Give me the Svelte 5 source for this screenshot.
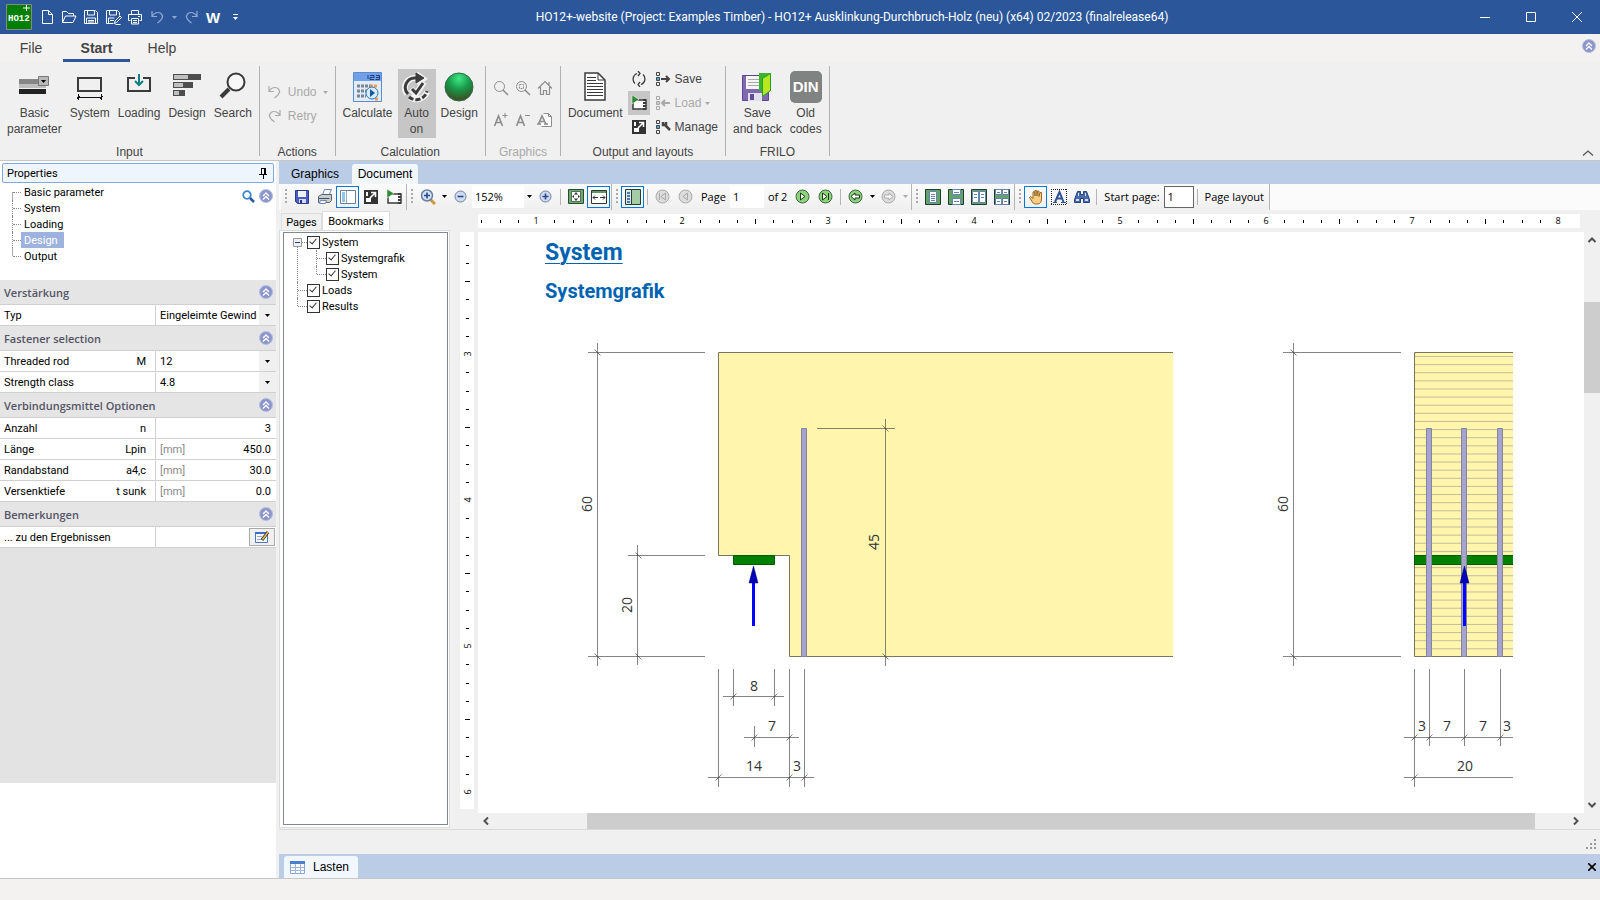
<script lang="ts">
  const inputTools = [
    { icon: 'basic', lines: ['Basic', 'parameter'] },
    { icon: 'system', lines: ['System'] },
    { icon: 'loading', lines: ['Loading'] },
    { icon: 'bars', lines: ['Design'] },
    { icon: 'search', lines: ['Search'] }
  ];
  const quickTools = ['new', 'open', 'disk', 'diskpen', 'print'];
  const graphicTools = ['lens', 'lensbox', 'home', 'aplus', 'aminus', 'apage'];
  const pages = ['Basic parameter', 'System', 'Loading', 'Design', 'Output'];

  let activePage = $state('Design');
  let viewerWidth = $state(0);
  let viewerHeight = $state(0);

  const sections = [
    {
      title: 'Verstärkung',
      rows: [{ id: 'typ', name: 'Typ', symbol: '', options: ['Eingeleimte Gewindestangen'] }]
    },
    {
      title: 'Fastener selection',
      rows: [
        { id: 'rod', name: 'Threaded rod', symbol: 'M', options: ['12'] },
        { id: 'strength', name: 'Strength class', symbol: '', options: ['4.8'] }
      ]
    },
    {
      title: 'Verbindungsmittel Optionen',
      rows: [
        { id: 'count', name: 'Anzahl', symbol: 'n', unit: '', value: '3' },
        { id: 'length', name: 'Länge', symbol: 'Lpin', unit: '[mm]', value: '450.0' },
        { id: 'edge', name: 'Randabstand', symbol: 'a4,c', unit: '[mm]', value: '30.0' },
        { id: 'sunk', name: 'Versenktiefe', symbol: 't sunk', unit: '[mm]', value: '0.0' }
      ]
    },
    {
      title: 'Bemerkungen',
      rows: [{ id: 'notes', name: '... zu den Ergebnissen', symbol: '', edit: true }]
    }
  ];

  // rulers: one unit is 146 px, split into eighths
  const UNIT = 146;

  function ticks(origin: number, length: number) {
    const result = [];
    const first = Math.ceil((-origin * 8) / UNIT);
    for (let i = first; origin + (i * UNIT) / 8 < length; i++) {
      result.push({ i, pos: Math.round(origin + (i * UNIT) / 8) });
    }
    return result;
  }

  let hTicks = $derived(ticks(58, viewerWidth - 42));
  let vTicks = $derived(ticks(122, viewerHeight - 46));

  const layers = Array.from({ length: 37 }, (_, i) => 356.5 + i * 8.12);
  const rods = [1429.5, 1464.5, 1500.5];

  // dimension slashes
  const slashes = [
    [733.5, 696.5], [774.5, 696.5], [754.5, 737.5], [789.5, 737.5],
    [718.5, 777.5], [789.5, 777.5], [804.5, 777.5],
    [1414.5, 737.5], [1429.5, 737.5], [1464.5, 737.5], [1500.5, 737.5], [1414.5, 777.5]
  ];
  const backSlashes = [
    [597.5, 352.5], [597.5, 656.5], [638.5, 555.5], [638.5, 656.5],
    [885.5, 428.5], [885.5, 656.5], [1293.5, 352.5], [1293.5, 656.5]
  ];
</script>

{#snippet icon(name: string)}
  {#if name === 'new'}
    <svg width="16" height="16" fill="none" stroke="currentColor"><path d="M3.5 1.5h6l4 4v9h-10zM9.5 1.5v4h4" /></svg>
  {:else if name === 'open'}
    <svg width="16" height="16" fill="none" stroke="currentColor"><path d="M1.5 13.5v-11h4l2 2h5v2.500M1.500 13.500l3-6.500h10.500l-3 6.500z" /></svg>
  {:else if name === 'disk'}
    <svg width="16" height="16" fill="none" stroke="currentColor"><path d="M1.500 1.500h11l2 2v11h-13zM4.500 1.500v4.500h7v-4.500M3.500 14.500v-5.500h9v5.500M5 11.500h6M5 13h6" /></svg>
  {:else if name === 'diskpen'}
    <svg width="17" height="16" fill="none" stroke="currentColor"><path d="M8.500 14.500h-7v-13h11l2 2v3M4.500 1.500v4.500h7v-4.500M3.500 14.500v-5.500h6M5 11.500h4M9.500 14.500l.5-2.500 5-5 1.500 1.500-5 5zM10.500 15.500h5" /></svg>
  {:else if name === 'print'}
    <svg width="16" height="16" fill="none" stroke="currentColor"><path d="M4.500 5v-3.500h7v3.500M3.500 11.500h-2v-6h13v6h-2M4.500 9.500h7v5.500h-7zM6 11.500h4M6 13.500h4M11 7.500h2" /></svg>
  {:else if name === 'undo'}
    <svg width="15" height="14" fill="none" stroke="currentColor" stroke-width="1.200"><path d="M2 1v5.500h5M2 6.500c2-4 6-5 9-3 3 3 1.500 6-3.500 9.500" /></svg>
  {:else if name === 'redo'}
    <svg width="15" height="14" fill="none" stroke="currentColor" stroke-width="1.200"><path d="M13 1v5.500h-5M13 6.500c-2-4-6-5-9-3-3 3-1.500 6 3.500 9.500" /></svg>
  {:else if name === 'basic'}
    <svg width="32" height="30"><path fill="#868686" d="M1 7h27v5H1z" /><path fill="#bdbdbd" d="M1 12h27v4H1z" /><path fill="#222" d="M1 17h27v5H1z" /><path fill="#b9b9b9" stroke="#777" d="M20.500 4.500h10v9h-10z" /><path d="M23 8h5l-2.500 3z" /></svg>
  {:else if name === 'system'}
    <svg width="30" height="30" fill="none" stroke="#3b3b3b"><path stroke-width="2" d="M3 6h23v13H3z" /><path stroke="#111" d="M2 25.500h25M3.500 22v6M26.500 22v6M2 27l3-3M25 27l3-3" /></svg>
  {:else if name === 'loading'}
    <svg width="30" height="30" fill="none" stroke="#3b3b3b"><path stroke-width="2" d="M11 6H4v13h22V6h-7" /><path stroke="#118080" stroke-width="2" d="M15 2v10M11 9l4 4 4-4" /></svg>
  {:else if name === 'bars'}
    <svg width="30" height="30"><path fill="#4d4d4d" d="M1 2h28v6H1zM1 10h20v6H1zM1 18h12v6H1z" /><path fill="#bfbfbf" d="M2 3h14v4H2zM2 11h9v4H2zM2 19h5v4H2z" /></svg>
  {:else if name === 'search'}
    <svg width="30" height="30" fill="none" stroke="#3b3b3b"><circle cx="18" cy="10" r="8.500" stroke-width="2" fill="#f8f8f8" /><path stroke-width="4" d="M3 25l8-8" /></svg>
  {:else if name === 'calc'}
    <svg width="30" height="32"><path fill="#e3edf9" stroke="#5b8bd0" d="M.500 1.500h28v29h-28z" /><path fill="#72a0e8" d="M1 2h27v8H1z" /><path fill="none" stroke="#1d3f7d" d="M15 4v4M17 4.500h4v2h-4v2h4M23 4.500h3.500v4h-4M23 6.500h4" /><path fill="none" stroke="#7a8696" stroke-dasharray="3 1" stroke-width="3" d="M4 15h15M4 20h10M4 25h9" /><path fill="none" stroke="#ee9b54" stroke-dasharray="3 1" stroke-width="3" d="M17 15h8M22 28h4" /><circle cx="19" cy="22" r="6" fill="#d9ecfb" stroke="#2d77b9" /><path fill="#14599b" d="M17 18l5 4-5 4z" /></svg>
  {:else if name === 'auto'}
    <svg width="30" height="32" fill="none" stroke="#3b3b3b"><path stroke="#f2f2f2" stroke-width="6" d="M5 23a10 10 0 0 1 9-16M14 3l7 5-6 5M9 18l5 5 8-12M8 26a11 11 0 0 0 17-5" /><path stroke-width="3" d="M6 23a9.500 9.500 0 0 1 8-16" /><path fill="#3b3b3b" d="M14 2l8 5-8 5z" /><path stroke-width="3" d="M10 18l4 4 7-10" /><path stroke-width="3" stroke-dasharray="5 2" d="M7 26a11 11 0 0 0 18-6" /></svg>
  {:else if name === 'ball'}
    <svg width="30" height="32"><defs><radialGradient id="ball" cx=".5" cy=".2" r=".8"><stop offset="0" stop-color="#3fe884" /><stop offset=".5" stop-color="#18974a" /><stop offset="1" stop-color="#414a20" /></radialGradient></defs><circle cx="15" cy="16" r="14" fill="url(#ball)" stroke="#2c7047" /></svg>
  {:else if name === 'lens'}
    <svg width="16" height="16" fill="none" stroke="currentColor"><circle cx="6.500" cy="6.500" r="5" /><path stroke-width="1.500" d="M10 10l5 5" /></svg>
  {:else if name === 'lensbox'}
    <svg width="16" height="16" fill="none" stroke="currentColor"><circle cx="6.500" cy="6.500" r="5" /><path stroke-dasharray="2 1" d="M4.500 4.500h4v4h-4z" /><path stroke-width="1.500" d="M10 10l5 5" /></svg>
  {:else if name === 'home'}
    <svg width="16" height="16" fill="none" stroke="currentColor" stroke-width="1.200"><path d="M1 8.500L8 1.500l7 7M3.500 7v7.500h3v-4h3v4h3V7M12 2v3" /></svg>
  {:else if name === 'aplus' || name === 'aminus'}
    <svg width="16" height="16" fill="none" stroke="currentColor"><path stroke-width="1.600" d="M1.500 14l4-10 4 10M3 10.500h5" /><path d={name === 'aplus' ? 'M9.500 3.500h5M12 1v5' : 'M10 3.500h5'} /></svg>
  {:else if name === 'apage'}
    <svg width="16" height="16" fill="none" stroke="currentColor"><path fill="#fff" d="M6.500 1.500h5l3 3v10h-10" /><path d="M11.500 1.500v3h3" /><path stroke-width="1.600" d="M1.500 12l3.500-8 4 8M3 9.500h5M0 12h4M7 12h4" /></svg>
  {:else if name === 'document'}
    <svg width="30" height="32" fill="none" stroke="#3b3b3b"><path fill="#fff" stroke-width="1.500" d="M5 2h13l7 7v20H5z" /><path d="M18 2v7h7M7 6.500h9M7 9.500h9M7 12.500h16M7 15.500h16M7 18.500h16M7 21.500h16M7 24.500h16" /></svg>
  {:else if name === 'refresh'}
    <svg width="16" height="16" fill="none" stroke="#3b3b3b" stroke-width="1.300"><path d="M6 2.500a6 6 0 0 0-2 10M10 13.500a6 6 0 0 0 2-10M7 0l2 2.500-2 2.500M9 16l-2-2.500 2-2.500" /></svg>
  {:else if name === 'film'}
    <svg width="16" height="16"><path fill="#fff" stroke="#3b3b3b" stroke-width="1.500" d="M2 5h13v9H2z" /><path stroke="#3b3b3b" stroke-width="3" stroke-dasharray="2 1" d="M13.500 4v11" /><path fill="#2e8b32" stroke="#fff" stroke-width=".5" d="M1 0l7 4.500-7 4.500z" /></svg>
  {:else if name === 'expand'}
    <svg width="16" height="16"><path fill="#333" d="M1 1h14v14H1z" /><path fill="#fff" d="M3 9h5v4H3zM3 3h2v4H3z" /><path fill="none" stroke="#fff" stroke-width="1.600" d="M7 9l5-5M8 3.500h4.500V8" /></svg>
  {:else if name === 'lsave' || name === 'lload' || name === 'lmanage'}
    <svg width="16" height="16" fill="none" stroke="currentColor"><path d="M1.500 1.500h3v3h-3zM1.500 11.500h3v3h-3z" /><path fill={name === 'lload' ? '#c8c8c8' : '#45b3e8'} d="M1.500 6.500h3v3h-3z" />
      {#if name === 'lsave'}<path stroke-width="2" d="M6 8h8M11 5l3 3-3 3" />{:else if name === 'lload'}<path stroke-width="2" d="M15 8H7M10 5L7 8l3 3" />{:else}<path stroke-width="2.500" d="M8 3v3h3V3M10 6l5 5" />{/if}
    </svg>
  {:else if name === 'saveback'}
    <svg width="32" height="32"><path fill="#8069ae" stroke="#5c4593" d="M1.500 4.500h26v25h-26z" /><path fill="#f5f5f5" d="M5 5h17v13H5z" /><path stroke="#aaa" d="M7 8.500h12M7 11.500h12M7 14.500h12" /><path fill="#e1e1ec" d="M7 22h14v8H7z" /><path fill="#604c97" d="M9 23h4v6H9z" /><path fill="#38b52c" d="M18 2h12v18H18z" /><path fill="#b7e81f" stroke="#21a12b" d="M21.500 7.500l8-5v17l-8 6z" /></svg>
  {:else if name === 'pin'}
    <svg width="9" height="11" fill="none" stroke="#000"><path d="M2.500 0v6.500M2 .500h4M0 6.500h8M4.500 7v4" /><path stroke-width="2" d="M6 0v6" /></svg>
  {:else if name === 'bluelens'}
    <svg width="13" height="13" fill="none"><circle cx="5" cy="5" r="3.800" stroke="#3d86cf" stroke-width="1.800" /><path stroke="#2857a5" stroke-width="2.500" d="M8 8l4 4" /></svg>
  {:else if name === 'collapse'}
    <svg width="14" height="14" fill="none"><circle cx="7" cy="7" r="6.500" fill="#8c95cb" stroke="#b5bfe0" /><path stroke="#fff" stroke-width="1.300" d="M4 7l3-3 3 3M4 10.500l3-3 3 3" /></svg>
  {:else if name === 'edit'}
    <svg width="16" height="14"><path fill="#f4f8ff" stroke="#4c78c4" d="M1.500 2.500h12v10h-12z" /><path fill="#3d6fc6" d="M1 2h13v2H1z" /><path stroke="#9ab" d="M3 6.500h5M3 9.500h5" /><path stroke="#333" stroke-width="3" d="M8 10l6-8" /><path stroke="#e9b64d" stroke-width="1.600" d="M8.500 9.500l5.500-7.500" /></svg>
  {:else if name === 'bluedisk'}
    <svg width="16" height="16"><path fill="#4b5cc0" stroke="#2a3a8c" d="M1.500 1.500h13v13h-11l-2-2z" /><path fill="#eef2fc" d="M4 2h8v6H4z" /><path fill="#d5daee" d="M5 10h7v4H5z" /><path fill="#27357f" d="M6 11h2v3H6z" /></svg>
  {:else if name === 'printer'}
    <svg width="16" height="16"><path fill="#fff" stroke="#6d89b3" d="M5.500 6l2-5.500h7L12 6z" /><path fill="#c7cdd5" stroke="#59616c" d="M1.500 7.500l3-2h10v6l-2 2h-11z" /><path stroke="#4a4f57" d="M2 9.500h10.500" /><path fill="#f0d34a" d="M10 11h2v1h-2z" /><path fill="#fff" stroke="#6d89b3" d="M3.500 11.500h6l-1 3h-6z" /></svg>
  {:else if name === 'sidebar'}
    <svg width="16" height="14"><path fill="#fff" stroke="#6f7f92" d="M.500.500h15v13H.500z" /><path fill="#8cc8ea" d="M2 2h3v10H2z" /><path stroke="#9aa7b5" d="M6.500 1v12" /></svg>
  {:else if name === 'zoomdoc'}
    <svg width="16" height="16" fill="none"><path stroke="#c99b3d" stroke-width="3" d="M10 10l5 5" /><circle cx="7" cy="6.500" r="5.500" fill="#d4e2f4" stroke="#6a7f9c" stroke-width="1.500" /><path stroke="#29498f" stroke-width="1.600" d="M4 6.500h6M7 3.500v6" /></svg>
  {:else if name === 'minus' || name === 'plus'}
    <svg width="13" height="13" fill="none"><circle cx="6.500" cy="6.500" r="5.500" fill="#cfdcef" stroke="#71809b" /><path stroke="#29498f" stroke-width="1.600" d={name === 'plus' ? 'M3.500 6.500h6M6.500 3.500v6' : 'M3.500 6.500h6'} /></svg>
  {:else if name === 'fit'}
    <svg width="16" height="16" fill="none"><path fill="#6fa876" stroke="#234f2b" d="M.500.500h15v14H.500z" /><path fill="#fff" stroke="#55705a" d="M3.500 2.500h9v10h-9z" /><path fill="#333" d="M8 3l2 2.500H6zM8 12l2-2.500H6zM4 7.500L6 6v3zM12 7.500L10 6v3z" /></svg>
  {:else if name === 'fitwidth'}
    <svg width="16" height="16" fill="none"><path fill="#fff" stroke="#333" d="M.500 1.500h15v13H.500z" /><path fill="#5a9a62" d="M1 2h14v2H1z" /><path stroke="#333" d="M2 8.500h5M9 8.500h5M4 6.500l-2 2 2 2M12 6.500l2 2-2 2" /></svg>
  {:else if name === 'thumbs'}
    <svg width="16" height="16"><path fill="#a5cda5" stroke="#24402a" d="M.500.500h15v15H.500z" /><path fill="#dbe8f2" d="M1 1h5v14H1z" /><path fill="#4c7aa9" d="M2 3h3v2H2zM2 6h3v2H2zM2 9h3v2H2zM2 12h3v2H2z" /><path stroke="#24402a" d="M6.500 1v14" /></svg>
  {:else if name === 'first' || name === 'prev'}
    <svg width="15" height="15" fill="none" stroke="#aaa"><circle cx="7.500" cy="7.500" r="6.500" fill="#dcdcdc" />{#if name === 'first'}<path d="M4.500 4v7M10.500 4L6 7.500l4.500 3.500z" />{:else}<path d="M9.500 4L5 7.500 9.500 11z" />{/if}</svg>
  {:else if name === 'next' || name === 'last'}
    <svg width="15" height="15" fill="none" stroke="#1d3a20"><circle cx="7.500" cy="7.500" r="6.500" fill="#8fd07c" stroke="#3b6b3e" /><path fill="#eafbe2" d={name === 'last' ? 'M4.500 4L9 7.500 4.500 11zM10.500 4v7' : 'M5.500 4L10 7.500 5.500 11z'} /></svg>
  {:else if name === 'back' || name === 'forward'}
    <svg width="15" height="15" fill="none"><circle cx="7.500" cy="7.500" r="6.500" fill={name === 'back' ? '#8fd07c' : '#dcdcdc'} stroke={name === 'back' ? '#3b6b3e' : '#aaa'} /><path fill="#fff" stroke={name === 'back' ? '#1d3a20' : '#aaa'} d={name === 'back' ? 'M3 7.500l4-3.500v2h4.500v3H7v2z' : 'M12 7.500L8 4v2H3.500v3H8v2z'} /></svg>
  {:else if name === 'single' || name === 'cont' || name === 'facing' || name === 'grid'}
    <svg width="16" height="16"><path fill="#63a36a" stroke="#1c3f2c" d="M.500.500h15v15H.500z" />
      <g fill="#fff" stroke="#6483b0">
        {#if name === 'single'}<path d="M4.500 2.500h7v11h-7zM6 5.500h4M6 7.500h4M6 9.500h4M6 11.500h4" />
        {:else if name === 'cont'}<path d="M4.500.500h8v5h-8zM4.500 9.500h8v6h-8zM6 3.500h5M6 12.500h5" />
        {:else if name === 'facing'}<path d="M1.500 2.500h6v11h-6zM8.500 2.500h6v11h-6zM3 5.500h3M3 8.500h3M10 5.500h3M10 8.500h3" />
        {:else}<path d="M1.500.500h6v5h-6zM8.500.500h6v5h-6zM1.500 9.500h6v6h-6zM8.500 9.500h6v6h-6zM3 3.500h3M10 3.500h3M3 12.500h3M10 12.500h3" />{/if}
      </g>
    </svg>
  {:else if name === 'hand'}
    <svg width="16" height="16"><path fill="#f6cf85" stroke="#9b6a23" d="M5 14L1.500 8.500l1-1L5 9.500V3l1.500-.5L7 7V1.500h1.500L9 7l.5-5H11v5.500l1-4h1.500V10c0 3-1.500 5-4 5C7 15 6 15 5 14z" /></svg>
  {:else if name === 'textsel'}
    <svg width="16" height="16" fill="none"><path stroke="#222" stroke-dasharray="1 1" d="M0 .500h16M0 15.500h16M.500 0v16M15.500 0v16" /><path stroke="#315292" stroke-width="2" d="M4 13L8.500 3l4 10M5.500 9.500h6" /><path stroke="#315292" d="M2 13.500h4M10 13.500h5" /></svg>
  {:else if name === 'find'}
    <svg width="16" height="16"><path fill="#4a6bb0" stroke="#27417c" d="M3.500 2.500h3v3h3v-3h3l3 8v3h-6v-4h-3v4h-6v-3z" /><path fill="#cfe0f8" d="M2 10h3v2H2zM11 10h3v2h-3zM4 4h1v3H4zM11 4h1v3h-1z" /></svg>
  {/if}
{/snippet}

{#snippet caret()}
  <svg class="caret" width="5" height="3"><path fill="currentColor" d="M0 0h5L2.500 3z" /></svg>
{/snippet}

{#snippet bigTool(name: string, lines: string[], on = false)}
  <button class="big-tool" class:on>
    <span class="big-icon">{@render icon(name)}</span>
    {#each lines as line}<span>{line}</span>{/each}
  </button>
{/snippet}

{#snippet tool(name: string, on = false)}
  <button class="tool" class:on aria-label={name}>{@render icon(name)}</button>
{/snippet}

{#snippet arrow(x: number)}
  <path fill="#00f" d={`M${x - 1.500} 582h3v44h-3z`} />
  <path fill="#00b" stroke="#006" stroke-width=".5" d={`M${x} 566l4.500 17h-9z`} />
{/snippet}

<div class="app">
  <header class="titlebar">
    <div class="quick">
      <svg class="logo" width="26" height="26"><path fill="#008000" stroke="#888" d="M.500.500h25v25H.500z" /><path stroke="#fff" d="M17 4h7M20.500 1v6" /><text x="2" y="17" fill="#fff" font-size="9" font-weight="bold" font-family="Liberation Mono">HO12</text></svg>
      {#each quickTools as name}
        <button aria-label={name}>{@render icon(name)}</button>
      {/each}
      <button class="faded" aria-label="undo">{@render icon('undo')}</button>
      <button class="faded narrow" aria-label="undo list">{@render caret()}</button>
      <button class="faded" aria-label="redo">{@render icon('redo')}</button>
      <button class="word">W</button>
      <button aria-label="customize"><svg width="7" height="7" fill="currentColor"><path d="M1 0h5v1H1zM1 3h5L3.500 6z" /></svg></button>
    </div>
    <h1>HO12+-website (Project: Examples Timber) - HO12+ Ausklinkung-Durchbruch-Holz (neu) (x64) 02/2023 (finalrelease64)</h1>
    <div class="window-buttons">
      <button aria-label="minimize"><svg width="10" height="10" stroke="#fff"><path d="M0 5.500h10" /></svg></button>
      <button aria-label="maximize"><svg width="10" height="10" fill="none" stroke="#fff"><path d="M.500.500h9v9h-9z" /></svg></button>
      <button aria-label="close"><svg width="10" height="10" stroke="#fff"><path d="M0 0l10 10M10 0L0 10" /></svg></button>
    </div>
  </header>

  <nav class="menu">
    <button>File</button>
    <button class="active">Start</button>
    <button>Help</button>
    <button class="menu-end" aria-label="collapse">{@render icon('collapse')}</button>
  </nav>

  <section class="ribbon">
    <div class="group">
      <div class="tools">
        {#each inputTools as t}{@render bigTool(t.icon, t.lines)}{/each}
      </div>
      <div class="group-name">Input</div>
    </div>
    <div class="group">
      <div class="small-list disabled actions">
        <button>{@render icon('undo')}<span>Undo</span>{@render caret()}</button>
        <button>{@render icon('redo')}<span>Retry</span></button>
      </div>
      <div class="group-name">Actions</div>
    </div>
    <div class="group">
      <div class="tools tight">
        {@render bigTool('calc', ['Calculate'])}
        {@render bigTool('auto', ['Auto', 'on'], true)}
        {@render bigTool('ball', ['Design'])}
      </div>
      <div class="group-name">Calculation</div>
    </div>
    <div class="group disabled">
      <div class="icon-grid">
        {#each graphicTools as name}
          <button aria-label={name}>{@render icon(name)}</button>
        {/each}
      </div>
      <div class="group-name">Graphics</div>
    </div>
    <div class="group">
      <div class="tools tight">
        {@render bigTool('document', ['Document'])}
        <div class="small-list">
          <button class="square" aria-label="refresh">{@render icon('refresh')}</button>
          <button class="square on" aria-label="preview">{@render icon('film')}</button>
          <button class="square" aria-label="expand">{@render icon('expand')}</button>
        </div>
        <div class="small-list">
          <button>{@render icon('lsave')}<span>Save</span></button>
          <button class="disabled">{@render icon('lload')}<span>Load</span>{@render caret()}</button>
          <button>{@render icon('lmanage')}<span>Manage</span></button>
        </div>
      </div>
      <div class="group-name">Output and layouts</div>
    </div>
    <div class="group">
      <div class="tools">
        {@render bigTool('saveback', ['Save', 'and back'])}
        <button class="big-tool"><span class="big-icon"><b class="din">DIN</b></span><span>Old</span><span>codes</span></button>
      </div>
      <div class="group-name">FRILO</div>
    </div>
    <button class="ribbon-toggle" aria-label="hide ribbon"><svg width="12" height="6" fill="none" stroke="#555" stroke-width="1.300"><path d="M1 5.500l5-4.500 5 4.500" /></svg></button>
  </section>

  <main>
    <aside>
      <div class="panel-title"><span>Properties</span>{@render icon('pin')}</div>
      <div class="nav-area">
        <ul class="nav-tree">
          {#each pages as page}
            <li><button class:selected={page === activePage} onclick={() => (activePage = page)}>{page}</button></li>
          {/each}
        </ul>
        <div class="nav-icons">{@render icon('bluelens')}{@render icon('collapse')}</div>
      </div>
      <div class="properties">
        {#each sections as section}
          <h2>{section.title}{@render icon('collapse')}</h2>
          {#each section.rows as row}
            <div class="prop">
              <label for={row.id}><span>{row.name}</span><span>{row.symbol}</span></label>
              <div class="value">
                {#if row.options}
                  <select id={row.id}>
                    {#each row.options as option}<option>{option}</option>{/each}
                  </select>
                  <span class="drop">{@render caret()}</span>
                {:else if row.edit}
                  <button id={row.id} class="edit" aria-label="edit">{@render icon('edit')}</button>
                {:else}
                  <span class="unit">{row.unit}</span>
                  <input id={row.id} value={row.value} />
                {/if}
              </div>
            </div>
          {/each}
        {/each}
      </div>
    </aside>

    <section class="workspace">
      <div class="doc-tabs">
        <button>Graphics</button>
        <button class="active">Document</button>
      </div>

      <div class="toolbar">
        <div class="bar">
          {@render tool('bluedisk')}{@render tool('printer')}{@render tool('sidebar', true)}{@render tool('expand')}{@render tool('film')}
        </div>
        <div class="bar">
          {@render tool('zoomdoc')}
          <button class="drop-arrow" aria-label="zoom list">{@render caret()}</button>
          {@render tool('minus')}
          <input class="zoom" aria-label="zoom" value="152%" />
          <button class="drop-arrow" aria-label="zoom values">{@render caret()}</button>
          {@render tool('plus')}
          <i></i>
          {@render tool('fit')}{@render tool('fitwidth', true)}
        </div>
        <div class="bar">
          {@render tool('thumbs', true)}
          <i></i>
          {@render tool('first')}{@render tool('prev')}
          <label for="page">Page</label>
          <input id="page" class="page" value="1" />
          <span>of 2</span>
          {@render tool('next')}{@render tool('last')}
          <i></i>
          {@render tool('back')}
          <button class="drop-arrow" aria-label="back list">{@render caret()}</button>
          {@render tool('forward')}
          <button class="drop-arrow off" aria-label="forward list">{@render caret()}</button>
        </div>
        <div class="bar">
          {@render tool('single')}{@render tool('cont')}{@render tool('facing')}{@render tool('grid')}
        </div>
        <div class="bar">
          {@render tool('hand', true)}{@render tool('textsel')}{@render tool('find')}
          <i></i>
          <label for="start">Start page:</label>
          <input id="start" class="start" value="1" />
          <i></i>
          <button class="text-button">Page layout</button>
        </div>
      </div>

      <div class="content">
        <div class="outline">
          <div class="outline-tabs">
            <button>Pages</button>
            <button class="active">Bookmarks</button>
          </div>
          <div class="outline-frame">
            <ul class="check-tree">
              <li class="root">
                <svg class="toggle" width="9" height="9"><path fill="#eee" stroke="#999" d="M.500.500h8v8h-8z" /><path stroke="#24458f" d="M2 4.500h5" /></svg>
                <label><input type="checkbox" checked />System</label>
                <ul>
                  <li><label><input type="checkbox" checked />Systemgrafik</label></li>
                  <li><label><input type="checkbox" checked />System</label></li>
                </ul>
              </li>
              <li><label><input type="checkbox" checked />Loads</label></li>
              <li><label><input type="checkbox" checked />Results</label></li>
            </ul>
          </div>
        </div>

        <div class="viewer" bind:clientWidth={viewerWidth} bind:clientHeight={viewerHeight}>
          <svg class="h-ruler" height="14">
            {#each hTicks as t}
              {#if t.i % 8 === 0}
                <text x={t.pos} y="10">{t.i / 8 + 1}</text>
              {:else}
                <path d={`M${t.pos + 0.5} ${t.i % 4 ? 6 : 5}v${t.i % 4 ? 3 : 5}`} />
              {/if}
            {/each}
          </svg>
          <svg class="v-ruler" width="14">
            {#each vTicks as t}
              {#if t.i % 8 === 0}
                <text transform={`translate(11 ${t.pos}) rotate(-90)`}>{t.i / 8 + 3}</text>
              {:else}
                <path d={`M${t.i % 4 ? 6 : 5} ${t.pos + 0.5}h${t.i % 4 ? 3 : 5}`} />
              {/if}
            {/each}
          </svg>
          <article class="paper">
            <h3 class="chapter">System</h3>
            <h3>Systemgrafik</h3>
            <svg class="drawing" width="1035" height="480" viewBox="478 320 1035 480">
              <path class="wood" d="M1173 352.500H718.500v203h71v101H1173" />
              <path class="steel" d="M733.500 555.500h41v9h-41z" />
              <path class="rod" d="M801.500 428.500h5v228h-5z" />
              {@render arrow(753.5)}

              <path class="wood" d="M1520 352.500h-105.500v304h105.500" />
              {#each layers as y}
                <path class="layer" d={`M1415 ${y}h98`} />
              {/each}
              <path class="steel" d="M1414.500 555.500h105v9h-105z" />
              {#each rods as x}
                <path class="rod" d={`M${x - 3} 428.500h5v228h-5z`} />
              {/each}
              {@render arrow(1464.5)}

              <g class="dim">
                <path d="M597.500 343v323M588 352.500h117M588 656.500h117" />
                <path d="M637.500 545v120M628 555.500h77" />
                <path d="M885.500 419v247M817 428.500h78" />
                <path d="M718.500 669v118M789.500 669v118M804.500 669v118M708 777.500h106" />
                <path d="M733.500 669v37M774.500 669v37M723 696.500h61" />
                <path d="M754.500 726v21M744 737.500h55" />
                <path d="M1293.500 343v323M1283 352.500h118M1283 656.500h118" />
                <path d="M1414.500 669v118M1429.500 669v77M1464.500 669v77M1500.500 669v77" />
                <path d="M1404 737.500h109M1404 777.500h109" />
                {#each slashes as [x, y]}<path d={`M${x - 3} ${y + 3}l6-6`} />{/each}
                {#each backSlashes as [x, y]}<path d={`M${x - 3} ${y - 3}l6 6`} />{/each}
              </g>
              <g class="dim-text">
                <text transform="translate(592 504) rotate(-90)">60</text>
                <text transform="translate(632 605) rotate(-90)">20</text>
                <text transform="translate(879 542) rotate(-90)">45</text>
                <text transform="translate(1288 504) rotate(-90)">60</text>
                <text x="754" y="691">8</text>
                <text x="772" y="731">7</text>
                <text x="754" y="771">14</text>
                <text x="797" y="771">3</text>
                <text x="1422" y="731">3</text>
                <text x="1447" y="731">7</text>
                <text x="1483" y="731">7</text>
                <text x="1507" y="731">3</text>
                <text x="1465" y="771">20</text>
              </g>
            </svg>
          </article>
          <div class="v-scroll">
            <svg width="16" height="16"><path d="M4.500 10L8 6.500l3.500 3.500" /></svg>
            <div class="track"><div class="thumb"></div></div>
            <svg width="16" height="16"><path d="M4.500 6L8 9.500 11.500 6" /></svg>
          </div>
          <div class="h-scroll">
            <svg width="16" height="16"><path d="M10 4.500L6.500 8l3.500 3.500" /></svg>
            <div class="track"><div class="thumb"></div></div>
            <svg width="16" height="16"><path d="M6 4.500L9.500 8 6 11.500" /></svg>
          </div>
        </div>
      </div>

      <div class="grip-row">
        <svg width="12" height="10" fill="#999"><path d="M9 0h2v2H9zM5 4h2v2H5zM9 4h2v2H9zM1 8h2v2H1zM5 8h2v2H5zM9 8h2v2H9z" /></svg>
      </div>

      <div class="bottom-tabs">
        <button>
          <svg width="15" height="13"><path fill="#fff" stroke="#8aa4cf" d="M.500.500h14v12H.500z" /><path fill="#4b7fd1" d="M0 0h15v3H0z" /><path stroke="#9db4dc" d="M5.500 3v10M10.500 3v10M1 6.500h13M1 9.500h13" /></svg>
          Lasten
        </button>
        <button class="close" aria-label="close panel"><svg width="8" height="8" stroke="#000" stroke-width="1.600"><path d="M0 0l8 8M8 0L0 8" /></svg></button>
      </div>
    </section>
  </main>

  <footer></footer>
</div>

<style>
  :global(body) {
    margin: 0;
    overflow: hidden;
  }

  .app {
    height: 100vh;
    display: flex;
    flex-direction: column;
    background: #f0f0f0;
    color: #000;
    font-family: "Liberation Sans", Arial, sans-serif;
    font-size: 11px;
  }

  button,
  input,
  select {
    margin: 0;
    padding: 0;
    border: none;
    background: none;
    color: inherit;
    font: inherit;
  }

  button {
    display: flex;
    align-items: center;
    justify-content: center;
    white-space: nowrap;
  }

  svg {
    display: block;
    flex: none;
  }

  ul {
    list-style: none;
    margin: 0;
    padding: 0;
  }

  /* title bar */
  .titlebar {
    height: 34px;
    flex: none;
    display: grid;
    grid-template-columns: 1fr auto 1fr;
    align-items: center;
    background: #2b579a;
    color: #fff;
  }

  .titlebar h1 {
    margin: 0 0 0 104px;
    font: 12px/16px Roboto, sans-serif;
  }

  .quick {
    display: flex;
    align-items: center;
    padding-left: 6px;
  }

  .logo {
    margin-right: 4px;
  }

  .quick button {
    width: 22px;
    height: 24px;
  }

  .quick .narrow {
    width: 12px;
  }

  .quick .faded {
    color: #8fa9d0;
  }

  .quick .word {
    font-size: 15px;
    font-weight: bold;
  }

  .window-buttons {
    display: flex;
    justify-content: flex-end;
  }

  .window-buttons button {
    width: 46px;
    height: 34px;
  }

  /* ribbon */
  .menu {
    height: 28px;
    flex: none;
    display: flex;
    padding-left: 7px;
    background: #f3f2f0;
    color: #444;
    font-size: 14px;
  }

  .menu button {
    width: 48px;
    box-sizing: border-box;
    padding-top: 2px;
    border-bottom: 3px solid transparent;
    margin-right: 8px;
  }

  .menu .active {
    width: 67px;
    font-weight: bold;
    border-color: #2b579a;
  }

  .menu .menu-end {
    width: 14px;
    margin: 0 4px 0 auto;
    padding: 0 0 2px;
  }

  .ribbon {
    height: 98px;
    flex: none;
    display: flex;
    border-bottom: 1px solid #c6c6c6;
    color: #444;
    font-size: 12px;
  }

  .group {
    display: flex;
    flex-direction: column;
    justify-content: space-between;
    box-sizing: border-box;
    height: 90px;
    margin-top: 4px;
    padding: 3px 7px 0;
    border-right: 1px solid #b1b1b1;
  }

  .group-name {
    text-align: center;
    line-height: 8px;
  }

  .disabled {
    color: #a9a9a9;
  }

  .tools {
    display: flex;
    gap: 8px;
  }

  .tools.tight {
    gap: 5px;
  }

  .big-tool {
    flex-direction: column;
    justify-content: flex-start;
    height: 69px;
    line-height: 16px;
  }

  .big-icon {
    height: 36px;
    display: flex;
    align-items: center;
  }

  .big-tool.on {
    width: 38px;
    background: #c6c6c6;
  }

  .din {
    width: 32px;
    border-radius: 5px;
    background: #7f8382;
    color: #fff;
    font-size: 15px;
    line-height: 32px;
  }

  .small-list {
    display: flex;
    flex-direction: column;
    align-items: flex-start;
    margin-top: -2px;
  }

  .small-list button {
    height: 24px;
    gap: 4px;
  }

  .small-list.actions {
    padding-top: 13px;
  }

  .actions button {
    gap: 6px;
  }

  .small-list .square {
    width: 22px;
  }

  .square.on {
    background: #c6c6c6;
  }

  .icon-grid {
    display: grid;
    grid-template-columns: repeat(3, 22px);
    color: #8c8c8c;
    margin: 0 -3px;
    padding-top: 3px;
  }

  .icon-grid button {
    height: 32px;
  }

  .ribbon-toggle {
    margin: auto 6px 4px auto;
  }

  main {
    flex: 1;
    min-height: 0;
    display: flex;
    gap: 3px;
  }

  /* properties panel */
  aside {
    width: 276px;
    flex: none;
    display: flex;
    flex-direction: column;
    background: #fff;
  }

  aside,
  .outline {
    font-family: Roboto, "Liberation Sans", sans-serif;
  }

  .panel-title {
    display: flex;
    justify-content: space-between;
    align-items: center;
    height: 18px;
    margin: 2px 2px 0;
    padding: 0 5px 0 4px;
    border: 1px solid #84aadb;
    border-radius: 2px;
    background: #eff5fd;
  }

  .nav-area {
    display: flex;
    justify-content: space-between;
    height: 97px;
    box-sizing: border-box;
    padding: 1px 3px 0 12px;
  }

  .nav-tree li {
    display: flex;
    align-items: center;
    height: 16px;
    border-left: 1px dotted #888;
  }

  .nav-tree li:first-child {
    border-image: linear-gradient(transparent 50%, #aaa 50%) 1;
  }

  .nav-tree li:last-child {
    border-image: linear-gradient(#aaa 50%, transparent 50%) 1;
  }

  .nav-tree li::before {
    content: '';
    width: 8px;
    border-top: 1px dotted #888;
  }

  .nav-tree button {
    height: 16px;
    padding: 0 6px 0 3px;
  }

  .nav-tree .selected {
    background: #9db2de;
    color: #fff;
  }

  .nav-icons {
    display: flex;
    align-items: center;
    gap: 4px;
    height: 24px;
  }

  .properties {
    height: 503px;
    background: #e3e3e3;
  }

  .properties h2 {
    display: flex;
    justify-content: space-between;
    align-items: center;
    height: 24px;
    margin: 0;
    padding: 0 3px 0 4px;
    border-bottom: 1px solid #d0d0d0;
    background: #e5e5e5;
    color: #556;
    font: 600 11px "Open Sans", sans-serif;
  }

  .prop {
    display: grid;
    grid-template-columns: 156px 1fr;
    height: 20px;
    border-bottom: 1px solid #d0d0d0;
    background: #fff;
  }

  .prop label {
    display: flex;
    justify-content: space-between;
    align-items: center;
    padding: 0 9px 0 4px;
    border-right: 1px solid #d0d0d0;
  }

  .value {
    display: flex;
    align-items: center;
    min-width: 0;
    padding-left: 4px;
    position: relative;
  }

  select {
    appearance: none;
    width: 97px;
    overflow: hidden;
    white-space: nowrap;
  }

  .drop {
    position: absolute;
    right: 0;
    top: 0;
    bottom: 0;
    width: 17px;
    display: flex;
    align-items: center;
    justify-content: center;
    background: #f0f0f0;
    pointer-events: none;
  }

  .unit {
    width: 30px;
    color: #888;
  }

  .value input {
    flex: 1;
    min-width: 0;
    padding-right: 5px;
    text-align: right;
  }

  .edit {
    width: 26px;
    height: 18px;
    margin: 0 1px 0 auto;
    box-sizing: border-box;
    border: 1px solid #aaa;
    background: #f0f0f0;
  }

  /* document area */
  .workspace {
    flex: 1;
    min-width: 0;
    display: flex;
    flex-direction: column;
  }

  .doc-tabs {
    display: flex;
    align-items: flex-end;
    height: 23px;
    flex: none;
    background: #bbcde6;
    font-size: 12px;
  }

  .doc-tabs button {
    width: 66px;
    height: 20px;
    border-radius: 3px 3px 0 0;
  }

  .doc-tabs button:first-child {
    margin: 0 4px 0 3px;
  }

  .doc-tabs .active {
    background: #f2f7fe;
  }

  .toolbar {
    display: flex;
    flex: none;
    height: 26px;
    padding-left: 2px;
    background: #fbfbfb;
    font: 11px "Open Sans", sans-serif;
  }

  .bar {
    display: flex;
    align-items: center;
    padding: 0 1px 1px 0;
    border-right: 1px solid #b5b5b5;
    background: linear-gradient(#fbfbfb, #efefef);
  }

  .bar::before {
    content: '';
    width: 2px;
    height: 15px;
    margin: 0 3px 0 4px;
    background: repeating-linear-gradient(#aaa 0 2px, transparent 2px 4px);
  }

  .bar i {
    width: 1px;
    height: 16px;
    margin: 0 3px;
    background: #b5b5b5;
  }

  .bar label,
  .bar span {
    padding: 0 4px;
  }

  .tool {
    width: 23px;
    height: 22px;
    box-sizing: border-box;
  }

  .tool.on {
    border: 1px solid #0078d7;
  }

  .drop-arrow {
    width: 10px;
    height: 22px;
  }

  .drop-arrow.off {
    color: #aaa;
  }

  .bar input {
    height: 22px;
    box-sizing: border-box;
    padding: 0 3px;
    background: #fff;
  }

  .bar .zoom {
    width: 52px;
  }

  .bar .page {
    width: 34px;
  }

  .bar .start {
    width: 30px;
    border: 1px solid #666;
  }

  .text-button {
    padding: 0 4px;
  }

  .content {
    flex: 1;
    min-height: 0;
    display: flex;
    gap: 10px;
  }

  .outline {
    width: 171px;
    flex: none;
    display: flex;
    flex-direction: column;
    padding-top: 1px;
  }

  .outline-tabs {
    display: flex;
    align-items: flex-end;
    padding-left: 2px;
  }

  .outline-tabs button {
    width: 41px;
    height: 17px;
    border: 1px solid #dcdcdc;
    border-bottom: none;
    box-sizing: border-box;
  }

  .outline-tabs .active {
    width: 68px;
    height: 19px;
    background: #fff;
  }

  .outline-frame {
    flex: 1;
    display: flex;
    padding: 1px 1px 2px 3px;
    border: 1px solid #dcdcdc;
    margin-bottom: 1px;
    background: #fff;
  }

  .check-tree {
    flex: 1;
    border: 1px solid #828790;
    padding: 1px 0 0 9px;
  }

  .check-tree label {
    display: flex;
    align-items: center;
    gap: 2px;
    height: 16px;
  }

  .check-tree li {
    position: relative;
    padding-left: 14px;
  }

  .check-tree li::before {
    content: '';
    position: absolute;
    left: 4px;
    top: 0;
    bottom: 0;
    border-left: 1px dotted #888;
  }

  .check-tree li:last-child::before {
    bottom: auto;
    height: 8px;
  }

  .check-tree .root::before {
    top: 8px;
  }

  .check-tree li::after {
    content: '';
    position: absolute;
    left: 5px;
    top: 8px;
    width: 9px;
    border-top: 1px dotted #888;
  }

  .check-tree ul {
    padding-left: 5px;
  }

  .toggle {
    position: absolute;
    left: 0;
    top: 4px;
    z-index: 1;
  }

  input[type='checkbox'] {
    appearance: none;
    box-sizing: border-box;
    width: 13px;
    height: 13px;
    border: 1px solid #333;
    background: #fff;
    position: relative;
  }

  input[type='checkbox']:checked::after {
    content: '';
    position: absolute;
    left: 3px;
    top: 0;
    width: 3px;
    height: 6px;
    border: solid #333;
    border-width: 0 1px 1px 0;
    transform: rotate(40deg);
  }

  .viewer {
    flex: 1;
    min-width: 0;
    display: grid;
    grid-template-columns: 14px 1fr 16px;
    grid-template-rows: 14px 1fr 16px;
    column-gap: 4px;
    row-gap: 4px;
    padding-top: 4px;
  }

  .h-ruler {
    grid-column: 2;
    width: 100%;
    background: #fff;
  }

  .v-ruler {
    grid-column: 1;
    grid-row: 2;
    height: 100%;
    background: #fff;
  }

  .h-ruler path,
  .v-ruler path {
    stroke: #000;
  }

  .h-ruler text,
  .v-ruler text {
    font: 9px "Open Sans", sans-serif;
    text-anchor: middle;
  }

  .paper {
    grid-column: 2;
    grid-row: 2;
    min-height: 0;
    overflow: hidden;
    margin: 0 -4px -4px 0;
    padding-top: 6px;
    background: #fff;
  }

  .paper h3 {
    margin: 0 0 14px 67px;
    color: #0063b1;
    font: bold 20px/30px Roboto, sans-serif;
  }

  .paper .chapter {
    margin-bottom: 8px;
    font-size: 23px;
    text-decoration: underline;
    text-decoration-thickness: 1px;
    text-underline-offset: 3px;
  }

  .wood {
    fill: #fff5ad;
    stroke: #77745f;
  }

  .steel {
    fill: #008000;
    stroke: #005c00;
  }

  .rod {
    fill: #a5a3d0;
    stroke: #85849f;
  }

  .layer {
    stroke: #c4bd99;
  }

  .dim path {
    fill: none;
    stroke: #333;
    stroke-opacity: 0.6;
  }

  .dim-text text {
    fill: #333;
    font: 14px "Open Sans", sans-serif;
    text-anchor: middle;
  }

  .v-scroll {
    grid-column: 3;
    grid-row: 2;
    display: flex;
    flex-direction: column;
    margin-bottom: -4px;
  }

  .h-scroll {
    grid-column: 2;
    grid-row: 3;
    display: flex;
    margin-right: -4px;
  }

  .v-scroll path,
  .h-scroll path {
    fill: none;
    stroke: #505050;
    stroke-width: 2;
  }

  .track {
    flex: 1;
    display: flex;
  }

  .thumb {
    background: #cdcdcd;
  }

  .v-scroll .track {
    flex-direction: column;
    padding-top: 54px;
  }

  .v-scroll .thumb {
    height: 91px;
  }

  .h-scroll .thumb {
    flex: 1;
    margin: 0 33px 0 93px;
  }

  .grip-row {
    height: 25px;
    flex: none;
    display: flex;
    align-items: flex-end;
    justify-content: flex-end;
    box-sizing: border-box;
    padding: 0 3px 5px;
    border-top: 1px solid #dadada;
  }

  .bottom-tabs {
    display: flex;
    justify-content: space-between;
    align-items: flex-end;
    height: 24px;
    flex: none;
    padding: 0 4px 0 5px;
    background: #bbcde6;
    font-size: 12px;
  }

  .bottom-tabs button {
    gap: 8px;
    height: 22px;
    padding: 0 9px 0 6px;
    border-radius: 3px 3px 0 0;
    background: #f2f7fe;
  }

  .bottom-tabs .close {
    padding: 0;
    background: none;
  }

  footer {
    height: 21px;
    flex: none;
    border-top: 1px solid #c6c6c6;
    background: #f3f2f0;
  }
</style>
